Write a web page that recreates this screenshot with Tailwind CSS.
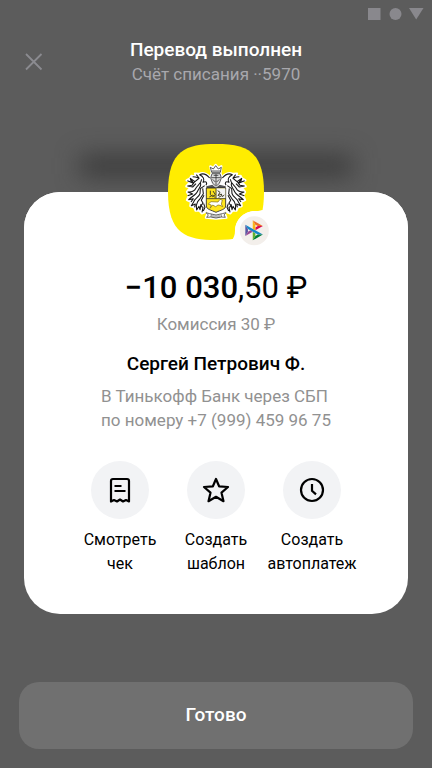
<!DOCTYPE html>
<html lang="ru">
<head>
<meta charset="utf-8">
<meta name="viewport" content="width=device-width, initial-scale=1">
<title>Перевод выполнен</title>
<script src="https://cdn.jsdelivr.net/npm/@tailwindcss/browser@4"></script>
</head>
<body class="flex min-h-screen flex-col bg-[#5c5c5c] font-['Roboto','Noto_Sans',sans-serif] text-base leading-6 text-black">

<div class="flex h-7 items-center justify-end pr-2" aria-hidden="true">
  <svg class="h-3 w-14" viewBox="0 0 56 12" fill="#89888d"><path d="M0 0h12.500v12H0z"/><circle cx="27.500" cy="6" r="6"/><path d="M41 0h14.500L48.200 11.500z"/></svg>
</div>

<header class="grid grid-cols-[68px_1fr_68px] items-center pt-2.5">
  <button type="button" aria-label="Закрыть" class="justify-self-center p-3">
    <svg class="size-5" viewBox="0 0 20 20" fill="none" stroke="#8b8b90" stroke-width="1.800"><path d="M2 2l15.500 15.500M17.500 2L2 17.500"/></svg>
  </button>
  <div class="text-center">
    <h1 class="text-[19px] font-medium leading-6 text-white">Перевод выполнен</h1>
    <p class="text-[17px] leading-6 text-[#a8a8ad]">Счёт списания ··5970</p>
  </div>
</header>

<main class="relative mx-6 mt-[106px] flex flex-col items-center rounded-[36px] bg-white pb-[38px]">
  <div class="absolute inset-x-14 -top-9 h-5 bg-[#303030]/80 blur-[12px]" aria-hidden="true"></div>
  <div class="absolute inset-x-0 top-0 h-16 rounded-t-[36px] bg-white" aria-hidden="true"></div>

  <svg class="relative -mt-12 size-24 overflow-visible" viewBox="24 24 288 288" role="img" aria-label="Тинькофф Банк, СБП">
    <defs>
      <g id="mantle">
        <path d="M149 123C137 111 128 109 117 114L105 113L110 122L94 120L91 127L80 133L90 139L79 151L91 154L81 168L87 178L81 192L93 198L91 210L102 213L107 224L118 223L125 232L137 228L136 157L149 150Z"/>
      </g>
      <g id="mantle-lines">
        <path d="M149 126C139 114 127 112 119 116C130 121 135 131 129 139C138 134 143 140 138 148"/>
        <path d="M109 116L117 126L106 123L98 122M118 126L105 137L91 127L101 142L82 134M91 128L94 138M104 137L96 148L83 150L98 153L108 143"/>
        <path d="M125 130C124 143 113 147 108 156C104 164 95 169 84 168L98 174L83 179M121 141C126 149 117 156 113 165C109 176 96 181 86 191L100 188L93 198"/>
        <path d="M134 149L121 158L120 173C117 184 103 188 101 198L94 209L106 204L104 214M128 157L130 173L121 187L113 197L109 208L110 222L117 211L120 221L123 204"/>
        <path d="M132 178L124 193L129 201L122 211L129 214L126 229M131 203L135 214L130 225"/>
      </g>
    </defs>

    <path fill="#ffed00" d="M168 24C257 24 312 42 312 168S257 312 168 312S24 294 24 168S79 24 168 24Z"/>

    <g fill="#fff" stroke="#fff" stroke-width="7" stroke-linejoin="round">
      <use href="#mantle"/>
      <use href="#mantle" transform="translate(336 0) scale(-1 1)"/>
      <path d="M151 91L160 96L167 87L175 96L184 91L181 111L185 124L183 146H199V210L191 225L199 245L168 248L138 245L145 225L137 210V146H153L151 124L155 111Z"/>
    </g>
    <g fill="none" stroke="#161616" stroke-width="3.200" stroke-linejoin="round">
      <use href="#mantle-lines"/>
      <use href="#mantle-lines" transform="translate(336 0) scale(-1 1)"/>
    </g>
    <g fill="none" stroke="#222" stroke-width="2.200">
      <path fill="#fff" d="M155 109L151 94L160 99L167 89L175 99L184 94L181 109ZM155 105H181"/>
      <path fill="#ddd" d="M156 113H180L184 126L178 142L168 151L158 142L152 126Z"/>
      <path d="M154 125H182M168 114V148M158 130L166 138M178 130L170 138M161 118H175"/>
    </g>
    <path fill="#555" d="M139 151L157 146L168 155L179 146L197 151V158H139Z"/>
    <path fill="#ffe51c" stroke="#222" stroke-width="2.500" d="M139 156H197V210C197 220 183 222 168 229C153 222 139 220 139 210Z"/>
    <path fill="#f4f4f4" d="M169 157H196V187H169Z"/>
    <path fill="none" stroke="#33332a" stroke-width="2.500" d="M139 188H197M168 157V187"/>
    <path fill="none" stroke="#45422a" stroke-width="3" d="M151 164V176L158 182L166 176L159 165M173 164L180 169L174 179L184 174L187 182L193 177M176 184L185 179M148 183L158 177L165 185"/>
    <path fill="#fff" stroke="#7a6811" stroke-width="2" d="M145 204L153 197L174 198L180 190L187 192L184 204L188 212L180 208L174 207L167 212L158 207L150 217L154 207Z"/>
    <path fill="#fff" stroke="#333" stroke-width="2.200" d="M138 230L149 233Q168 241 187 233L198 230L192 237L196 244L184 243Q168 249 152 243L140 244L145 237Z"/>
    <path fill="none" stroke="#333" stroke-width="2" d="M154 235L153 243M159 237V244M165 238V245M171 238V245M177 237V244M183 235L184 243"/>

    <path fill="#fff" d="M312 218V222C306 221 302 225 284 225C252 225 225 252 225 284C225 297 221 304 217 312H312Z"/>
    <circle cx="284" cy="285" r="59" fill="#fff"/>
    <circle cx="283" cy="284" r="43.500" fill="#f3efeb"/>
    <g transform="translate(256 253) scale(.54 .5)">
      <path fill="#5b57a2" d="M0 26.120l14.532 25.975v15.844L.017 93.863z"/>
      <path fill="#d90751" d="M55.797 42.643l13.617-8.346 27.868-.026-41.485 25.414z"/>
      <path fill="#fab718" d="M55.720 25.967l.077 34.390-14.566-8.950V0z"/>
      <path fill="#ed6f26" d="M97.282 34.271l-27.869.026-13.693-8.330L41.231 0z"/>
      <path fill="#63b22f" d="M55.797 94.007V77.322l-14.566-8.780.008 51.458z"/>
      <path fill="#1487c9" d="M69.380 85.737L14.531 52.095 0 26.120l97.223 59.583z"/>
      <path fill="#017f36" d="M41.240 120l14.556-25.993 13.583-8.270 27.843-.034z"/>
      <path fill="#984995" d="M.017 93.863l41.333-25.320-13.896-8.526-12.922 7.922z"/>
    </g>
  </svg>

  <p class="mt-7 text-[31px] leading-10"><span class="font-medium">−10 030</span>,50 ₽</p>
  <p class="mt-1 text-[17px] leading-6 text-[#919191]">Комиссия 30 ₽</p>
  <h2 class="mt-4 text-[19px] font-medium leading-6">Сергей Петрович Ф.</h2>
  <p class="mt-2 text-[17px] leading-6 text-[#919191]">В Тинькофф Банк через СБП<br>по номеру +7 (999) 459 96 75</p>

  <div class="mt-[29px] grid grid-cols-[repeat(3,96px)] text-center text-[16px] leading-6">
    <button type="button" class="flex flex-col items-center gap-[9px]">
      <span class="grid size-[58px] place-items-center rounded-full bg-[#f2f3f5]">
        <svg class="size-7" viewBox="0 0 28 28" fill="none" stroke="#000" stroke-width="2.200" stroke-linejoin="round"><path d="M5 25.500V5Q5 3 7 3H21Q23 3 23 5V25.500L20 24L17 25.500L14 23.500L11 25.500L8 24Z"/><path d="M8.500 10H15.500M8.500 15H19.500"/></svg>
      </span>
      <span>Смотреть<br>чек</span>
    </button>
    <button type="button" class="flex flex-col items-center gap-[9px]">
      <span class="grid size-[58px] place-items-center rounded-full bg-[#f2f3f5]">
        <svg class="size-7" viewBox="0 0 28 28" fill="none" stroke="#000" stroke-width="2.200" stroke-linejoin="round"><path d="M14 3L17.100 10.300L26 11L19.500 16.700L21.500 25.200L14 20.800L6.500 25.200L8.500 16.700L2 11L10.900 10.300Z"/></svg>
      </span>
      <span>Создать<br>шаблон</span>
    </button>
    <button type="button" class="flex flex-col items-center gap-[9px]">
      <span class="grid size-[58px] place-items-center rounded-full bg-[#f2f3f5]">
        <svg class="size-7" viewBox="0 0 28 28" fill="none" stroke="#000" stroke-width="2.200"><circle cx="14" cy="14" r="11"/><path d="M14 8V14.800L18 18.300"/></svg>
      </span>
      <span>Создать<br>автоплатеж</span>
    </button>
  </div>
</main>

<footer class="mt-auto px-[19px] pb-[19px]">
  <button type="button" class="h-[67px] w-full rounded-[20px] bg-[#707070] pb-0.5 text-[19px] font-medium text-white">Готово</button>
</footer>
</body>
</html>
